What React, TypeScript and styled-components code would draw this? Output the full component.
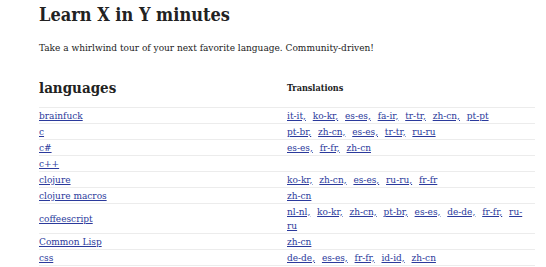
import React from 'react';
import styled, { createGlobalStyle } from 'styled-components';

const GlobalStyle = createGlobalStyle`
  body {
    margin: 0;
    background: #fff;
    color: #222;
    font-family: "DejaVu Serif Condensed", "DejaVu Serif", "Liberation Serif", serif;
  }
`;

const Page = styled.main`
  padding: 3px 11px 0 39px;
`;

const Title = styled.h1`
  margin: 0;
  font-size: 18px;
  line-height: 24px;
  font-weight: bold;
  color: #222;
`;

const Lead = styled.p`
  margin: 14px 0 0;
  font-size: 10px;
  line-height: 14px;
`;

const Header = styled.div`
  display: grid;
  grid-template-columns: 248px 1fr;
  align-items: end;
  margin-top: 24px;
  padding-bottom: 10px;
`;

const SectionTitle = styled.h2`
  margin: 0;
  font-size: 15px;
  line-height: 18px;
  font-weight: bold;
`;

const ColTitle = styled.h3`
  margin: 0 0 3px;
  font-size: 9px;
  line-height: 12px;
  font-weight: bold;
`;

const Table = styled.table`
  width: 496px;
  border-collapse: collapse;
  border-top: 1px solid #ececec;
  font-size: 10px;
  line-height: 14px;
`;

const Row = styled.tr`
  border-bottom: 1px solid #ececec;
`;

const Cell = styled.td<{ $first?: boolean }>`
  padding: 0.5px 0;
  width: ${(p) => (p.$first ? '248px' : 'auto')};
  vertical-align: middle;
`;

const Link = styled.a`
  color: #2b3a9c;
  text-decoration: underline;
  margin-right: 4px;
`;

const rows: [string, string[]][] = [
  ['brainfuck', ['it-it', 'ko-kr', 'es-es', 'fa-ir', 'tr-tr', 'zh-cn', 'pt-pt']],
  ['c', ['pt-br', 'zh-cn', 'es-es', 'tr-tr', 'ru-ru']],
  ['c#', ['es-es', 'fr-fr', 'zh-cn']],
  ['c++', []],
  ['clojure', ['ko-kr', 'zh-cn', 'es-es', 'ru-ru', 'fr-fr']],
  ['clojure macros', ['zh-cn']],
  ['coffeescript', ['nl-nl', 'ko-kr', 'zh-cn', 'pt-br', 'es-es', 'de-de', 'fr-fr', 'ru-ru']],
  ['Common Lisp', ['zh-cn']],
  ['css', ['de-de', 'es-es', 'fr-fr', 'id-id', 'zh-cn']],
];

export default function App() {
  return (
    <Page>
      <GlobalStyle />
      <Title>Learn X in Y minutes</Title>
      <Lead>Take a whirlwind tour of your next favorite language. Community-driven!</Lead>
      <Header>
        <SectionTitle>languages</SectionTitle>
        <ColTitle>Translations</ColTitle>
      </Header>
      <Table>
        <tbody>
          {rows.map(([lang, tr]) => (
            <Row key={lang}>
              <Cell $first>
                <Link href="#">{lang}</Link>
              </Cell>
              <Cell>
                {tr.map((t, i) => (
                  <React.Fragment key={t}>
                    <Link href="#">{i < tr.length - 1 ? t + ',' : t}</Link>{' '}
                  </React.Fragment>
                ))}
              </Cell>
            </Row>
          ))}
        </tbody>
      </Table>
    </Page>
  );
}
